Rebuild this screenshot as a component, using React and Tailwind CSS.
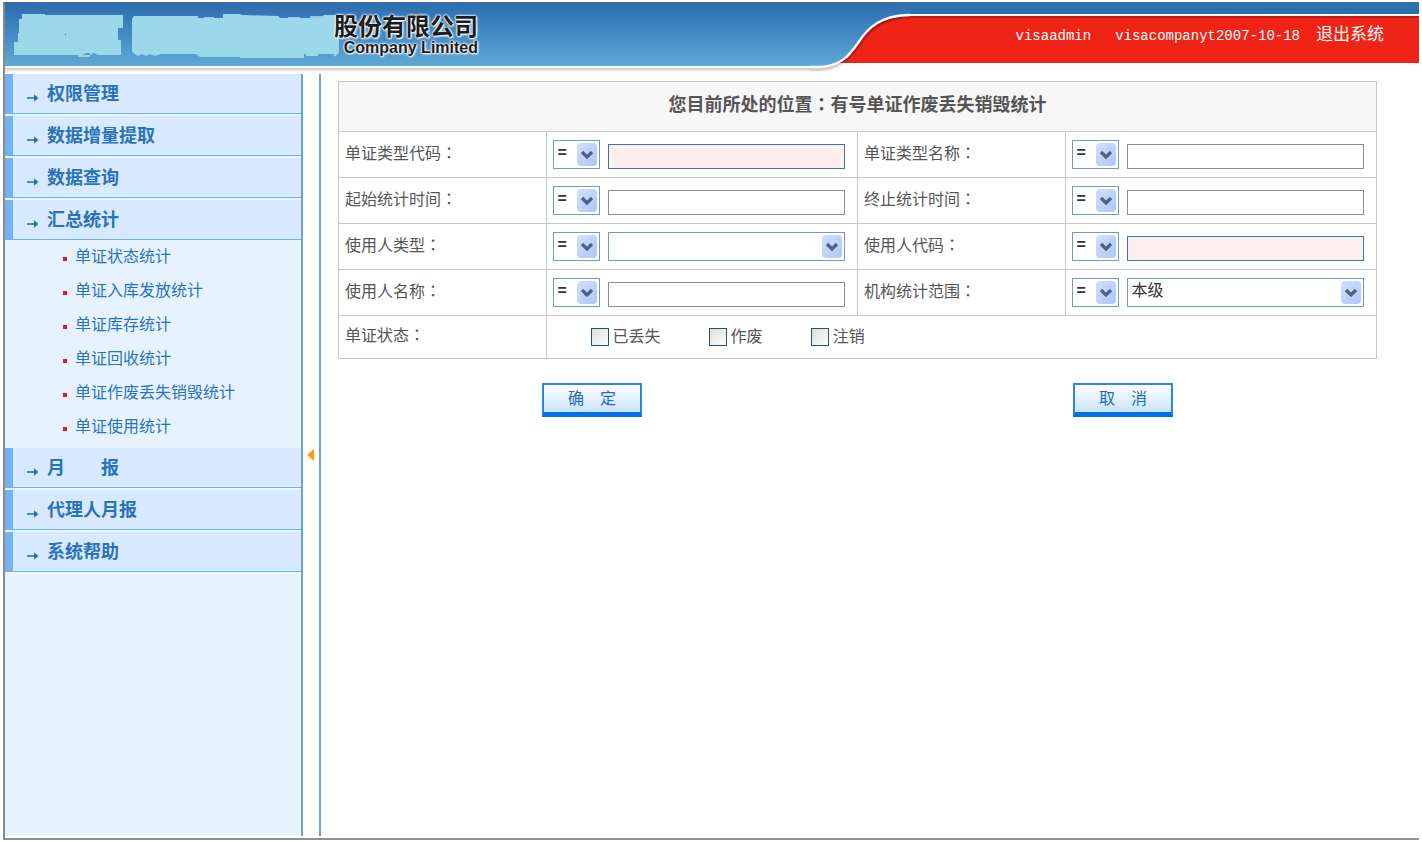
import { useState } from 'react';

const menuTop = [
  { name: '权限管理' },
  { name: '数据增量提取' },
  { name: '数据查询' },
  {
    name: '汇总统计',
    children: [
      '单证状态统计',
      '单证入库发放统计',
      '单证库存统计',
      '单证回收统计',
      '单证作废丢失销毁统计',
      '单证使用统计',
    ],
  },
  { name: '月\u3000\u3000报' },
  { name: '代理人月报' },
  { name: '系统帮助' },
];

const rows = [
  [
    { id: 'typeCode', label: '单证类型代码', type: 'code' },
    { id: 'typeName', label: '单证类型名称', type: 'text' },
  ],
  [
    { id: 'startTime', label: '起始统计时间', type: 'text' },
    { id: 'endTime', label: '终止统计时间', type: 'text' },
  ],
  [
    { id: 'userType', label: '使用人类型', type: 'select', options: [''] },
    { id: 'userCode', label: '使用人代码', type: 'code' },
  ],
  [
    { id: 'userName', label: '使用人名称', type: 'text' },
    { id: 'scope', label: '机构统计范围', type: 'select', options: ['本级'] },
  ],
];

const states = ['已丢失', '作废', '注销'];

// full-width colon, centred in its cell
const Colon = () => <span className="font-['Noto_Sans_CJK_TC',sans-serif]">：</span>;

function Select({ id, label, options, className }) {
  return (
    <div className={`relative ${className}`}>
      <select
        id={id}
        aria-label={label}
        className="block h-[29px] w-full appearance-none rounded-none border border-[#7299c4] bg-white pb-1 pl-1 pr-6 text-base leading-6 text-[#333] outline-none"
      >
        {options.map((o) => (
          <option key={o}>{o}</option>
        ))}
      </select>
      <span className="pointer-events-none absolute right-[3px] top-[3px] flex h-[23px] w-5 items-center justify-center rounded-sm bg-linear-to-br from-[#d3e0fd] to-[#adc5fa]">
        <svg width="14" height="10" viewBox="0 0 14 10" fill="none">
          <path d="M2 2 L7 7 L12 2" stroke="#4d6185" strokeWidth="3.2" />
        </svg>
      </span>
    </div>
  );
}

function Field({ field }) {
  return (
    <>
      <td className="border border-[#c8c8c8] px-1.5 pb-1">
        <label htmlFor={field.id}>
          {field.label}
          <Colon />
        </label>
      </td>
      <td className="border border-[#c8c8c8] py-2 pl-1.5 pr-3">
        <div className="flex items-end gap-2">
          <Select label={`${field.label} =`} options={['=']} className="w-[47px] shrink-0 font-bold" />
          {field.type === 'select' && (
            <Select id={field.id} options={field.options} className="min-w-0 flex-1" />
          )}
          {field.type === 'text' && (
            <input
              id={field.id}
              type="text"
              className="h-[25px] min-w-0 flex-1 border border-[#8e8e8e] bg-white px-1 outline-none"
            />
          )}
          {field.type === 'code' && (
            <input
              id={field.id}
              type="text"
              className="h-[25px] min-w-0 flex-1 border border-[#2f75c0] bg-[#fff0ed] px-1 outline-none"
            />
          )}
        </div>
      </td>
    </>
  );
}

function Logo() {
  return (
    <div className="flex items-start pl-[9px] pt-2.5">
      <svg width="328" height="48" viewBox="0 0 328 48" className="shrink-0">
        <g stroke="#dff1f7" strokeWidth="2" fill="none" opacity="0.6">
          <path d="M64 43 h12 M76 41 h2" />
          <path d="M120 39 l4 3 4 -2 4 2 4 -2 5 2 5 -2" />
          <path d="M190 5 h10 M274 5 h12 M296 4 h12 M292 42 h12 M324 31 v8 l-4 4" />
        </g>
        <path
          d="M8 1 H31 V2 H109 V15 H104 V27 H107 V42 H84 L80 40 H72 L68 42 H0 V29 H4 V20 H5 V6 H8 Z"
          fill="#9bd9ea"
        />
        <path
          d="M120 3 H184 V5 H209 V1 H226 L228 2 L264 3 L266 5 H306 L310 2 H322 V18 H325 V31 L323 41 H290 V45 H226 V44 H186 L182 41 H120 L118 38 V6 Z"
          fill="#9bd9ea"
        />
        <path d="M51 21 h1 v1 h-1 z" fill="#c23b4b" />
      </svg>
      <div className="-ml-2 flex flex-col items-end pt-0.5 font-bold text-[#1c1c1c] [text-shadow:0_0_2px_#fff,0_0_2px_#fff,0_0_3px_#fff,1px_1px_2px_#fff]">
        <span className="text-2xl leading-6">股份有限公司</span>
        <span className="font-['Liberation_Sans',sans-serif] text-base leading-[18px]">Company Limited</span>
      </div>
    </div>
  );
}

function Header() {
  return (
    <header className="flex h-[71px] shrink-0">
      <div className="min-w-0 flex-1">
        <div className="h-[63px] overflow-hidden bg-linear-to-b from-[#2a6db1] to-[#5ea9d5]">
          <Logo />
        </div>
        <div className="h-0.5 bg-white" />
        <div className="h-1 bg-linear-to-b from-[#c4c4c4] to-white" />
      </div>
      <svg width="100" height="71" viewBox="0 0 100 71" className="shrink-0">
        <defs>
          <linearGradient id="sky" x1="0" y1="0" x2="0" y2="63" gradientUnits="userSpaceOnUse">
            <stop offset="0" stopColor="#2a6db1" />
            <stop offset="1" stopColor="#5ea9d5" />
          </linearGradient>
          <filter id="soft" x="-10%" y="-10%" width="120%" height="130%">
            <feGaussianBlur stdDeviation="1.2" />
          </filter>
          <clipPath id="redArea">
            <path d="M26 60 C38 57 43 49 48 41 C58 24 72 12 100 12 V60 Z" />
          </clipPath>
        </defs>
        <path d="M-6 66 H7 C30 66 40 53 49 42" fill="none" stroke="#bbb" strokeWidth="3" filter="url(#soft)" />
        <path d="M26 60 C38 57 43 49 48 41 C58 24 72 12 100 12 V60 Z" fill="#f02416" />
        <g clipPath="url(#redArea)">
          <path
            d="M7 66 C30 66 40 53 49 41 C59 25 73 13 106 13"
            fill="none"
            stroke="#8f1208"
            strokeWidth="3"
            filter="url(#soft)"
          />
        </g>
        <path d="M0 0 H100 V12 C72 12 58 24 48 40 C39 53 30 64 7 64 H0 Z" fill="url(#sky)" />
        <path
          d="M0 64 H7 C30 64 39 53 48 40 C58 24 72 12 100 12"
          fill="none"
          stroke="#fff"
          strokeWidth="2.4"
        />
      </svg>
      <div className="w-[509px] shrink-0">
        <div className="h-[11px] bg-[#2b70b3]" />
        <div className="h-0.5 bg-white" />
        <div className="flex h-[47px] items-baseline justify-end border-t-2 border-[#bd1d12] bg-[#f02416] pr-[35px] pt-1.5 font-['Liberation_Mono','Noto_Sans_CJK_SC',monospace] text-sm text-white">
          <span>visaadmin</span>
          <span className="ml-6">visacompanyt2007-10-18</span>
          <a href="#logout" className="ml-4 text-[17px]">
            退出系统
          </a>
        </div>
      </div>
    </header>
  );
}

function Sidebar() {
  return (
    <nav className="w-[298px] shrink-0 border-r-2 border-[#6ba3d6] bg-[#e6f3ff] text-[#2a73ba]">
      {menuTop.map((item) => (
        <div key={item.name}>
          <a
            href="#menu"
            className="flex h-10 items-center border-b border-l-8 border-b-[#6fb0ec] border-l-[#74b2f6] bg-[#d8eaff] pl-3.5 text-lg font-bold leading-none"
          >
            <svg width="12" height="8" viewBox="0 0 12 8" className="mr-2 mt-2 shrink-0">
              <path d="M0 4 H10" stroke="#2a6fb5" strokeWidth="1.6" />
              <path d="M7 0.2 L11.5 4 L7 7.8 Z" fill="#2a6fb5" />
            </svg>
            {item.name}
          </a>
          {item.children ? (
            <ul className="pb-1">
              {item.children.map((child) => (
                <li key={child} className="flex h-[34px] items-center pl-[58px]">
                  <span className="mr-2 mt-1 size-1 bg-[#d81e1e]" />
                  <a href="#report" className="leading-8">
                    {child}
                  </a>
                </li>
              ))}
            </ul>
          ) : (
            <div className="h-0.5 bg-[#eff7ff]" />
          )}
        </div>
      ))}
    </nav>
  );
}

export default function App() {
  const [checked, setChecked] = useState([]);

  const toggle = (name) => {
    setChecked((prev) => (prev.includes(name) ? prev.filter((n) => n !== name) : [...prev, name]));
  };

  return (
    <div className="flex min-h-screen flex-col bg-white px-[3px] py-0.5 font-['Liberation_Sans','Noto_Sans_CJK_SC',sans-serif] text-base text-[#555]">
      <div className="flex flex-1 flex-col border-b-2 border-l-2 border-t border-b-[#93938e] border-l-[#8c8a80] border-t-[#5f6b78] pb-0.5">
        <Header />
        <div className="flex flex-1">
          <Sidebar />
          <button
            type="button"
            aria-label="收起菜单"
            className="flex w-4 shrink-0 items-center justify-center"
          >
            <svg width="8" height="12" viewBox="0 0 8 12">
              <path d="M7 0 V12 L0 6 Z" fill="#ff9c0a" />
            </svg>
          </button>
          <main className="min-w-0 flex-1 border-l-2 border-[#6ba3d6] pl-[17px] pr-[42px] pt-[7px]">
            <form onSubmit={(e) => e.preventDefault()}>
              <table className="w-full table-fixed border-collapse">
                <colgroup>
                  <col className="w-[20%]" />
                  <col className="w-[30%]" />
                  <col className="w-[20%]" />
                  <col className="w-[30%]" />
                </colgroup>
                <thead>
                  <tr>
                    <th colSpan={4} className="h-[50px] border border-[#c8c8c8] bg-[#f7f7f7] pb-1.5 text-lg">
                      您目前所处的位置
                      <Colon />
                      有号单证作废丢失销毁统计
                    </th>
                  </tr>
                </thead>
                <tbody>
                  {rows.map((row) => (
                    <tr key={row[0].id}>
                      {row.map((field) => (
                        <Field key={field.id} field={field} />
                      ))}
                    </tr>
                  ))}
                  <tr>
                    <td className="h-[43px] border border-[#c8c8c8] px-1.5 pb-1">
                      单证状态
                      <Colon />
                    </td>
                    <td colSpan={3} className="border border-[#c8c8c8] pl-11">
                      <div className="flex gap-12">
                        {states.map((name) => (
                          <label key={name} className="flex items-center gap-1">
                            <input
                              type="checkbox"
                              checked={checked.includes(name)}
                              onChange={() => toggle(name)}
                              className="size-[18px] appearance-none border border-[#1c5180] bg-linear-to-br from-[#dcdcd7] to-white checked:bg-[#21a121]"
                            />
                            {name}
                          </label>
                        ))}
                      </div>
                    </td>
                  </tr>
                </tbody>
              </table>
              <div className="mt-6 flex justify-between px-[204px]">
                {['确\u3000定', '取\u3000消'].map((text) => (
                  <button
                    key={text}
                    type="submit"
                    className="h-[34px] w-[100px] border-2 border-b-[5px] border-[#2a86e2] border-b-[#0070e8] bg-linear-to-b from-white to-[#c8e3fb] leading-6 text-[#1f6cb8]"
                  >
                    {text}
                  </button>
                ))}
              </div>
            </form>
          </main>
        </div>
      </div>
    </div>
  );
}
